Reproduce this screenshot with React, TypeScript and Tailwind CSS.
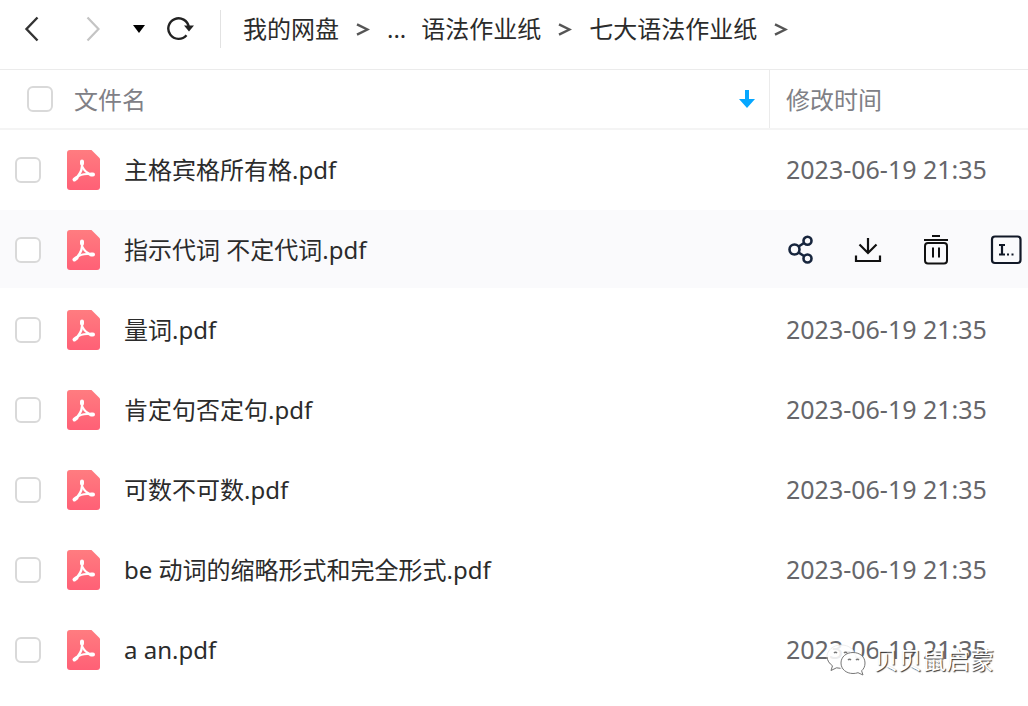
import React, { useState } from 'react';

interface FileItem {
  name: string;
  modified: string;
}

const files: FileItem[] = [
  { name: '主格宾格所有格.pdf', modified: '2023-06-19 21:35' },
  { name: '指示代词 不定代词.pdf', modified: '2023-06-19 21:35' },
  { name: '量词.pdf', modified: '2023-06-19 21:35' },
  { name: '肯定句否定句.pdf', modified: '2023-06-19 21:35' },
  { name: '可数不可数.pdf', modified: '2023-06-19 21:35' },
  { name: 'be 动词的缩略形式和完全形式.pdf', modified: '2023-06-19 21:35' },
  { name: 'a an.pdf', modified: '2023-06-19 21:35' },
];

const crumbs = ['我的网盘', '...', '语法作业纸', '七大语法作业纸'];

const PdfIcon = () => (
  <svg viewBox="0 0 33 40" className="w-[33px] h-10 shrink-0" aria-hidden="true">
    <defs>
      <linearGradient id="pdf-fill" x1="0" y1="0" x2="0" y2="1">
        <stop offset="0" stopColor="#ff7c80" />
        <stop offset="1" stopColor="#ff6076" />
      </linearGradient>
    </defs>
    <path d="M3 0H24.5L33 8.5V37a3 3 0 0 1-3 3H3a3 3 0 0 1-3-3V3a3 3 0 0 1 3-3Z" fill="url(#pdf-fill)" />
    <g fill="none" stroke="#fff" strokeLinecap="round" strokeLinejoin="round">
      <path d="M15 12C15.500 18 15 22 8 29.500" strokeWidth="2.400" />
      <path d="M15.500 17C17 20 20 24 25.500 24.500" strokeWidth="2" />
      <path d="M10 27.500C13 24.500 19 23.500 25.500 24.500" strokeWidth="2" />
      <path d="M15 11.500V13.500M7.500 29.500L9.500 28M24 24.500H26" strokeWidth="4" />
    </g>
  </svg>
);

const BackIcon = () => (
  <svg viewBox="0 0 16 26" className="w-4 h-[26px]" fill="none" stroke="currentColor" strokeWidth="2.400">
    <path d="M13.500 1.500L2.500 13L13.500 24.500" />
  </svg>
);

const ForwardIcon = () => (
  <svg viewBox="0 0 16 26" className="w-4 h-[26px]" fill="none" stroke="currentColor" strokeWidth="2.200">
    <path d="M3.500 1.500L14.500 13L3.500 24.500" />
  </svg>
);

const RefreshIcon = () => (
  <svg viewBox="0 0 28 26" className="w-7 h-[26px]" fill="none" stroke="currentColor" strokeWidth="2.400">
    <path d="M20.500 19.200A10.300 10.300 0 1 1 22.800 11" />
    <path d="M18 9.500H28L23 15.500Z" fill="currentColor" stroke="none" />
  </svg>
);

const CrumbArrow = () => (
  <svg viewBox="0 0 14 14" className="w-3.5 h-3.5 shrink-0" fill="none" stroke="#555" strokeWidth="2.400" aria-hidden="true">
    <path d="M1 2.300L11.500 7.500L1 12.700" />
  </svg>
);

const ShareIcon = () => (
  <svg viewBox="0 0 28 30" className="w-7 h-[30px]" fill="none" stroke="#17253d" strokeWidth="2.600">
    <circle cx="8.500" cy="14.500" r="5" />
    <circle cx="21.500" cy="5.800" r="4" />
    <circle cx="21.500" cy="23.500" r="4" />
    <path d="M12.600 11.500L18 8M12.600 17.500L18 21" />
  </svg>
);

const DownloadIcon = () => (
  <svg viewBox="0 0 28 30" className="w-7 h-[30px]" fill="none" stroke="#111" strokeWidth="2.200">
    <path d="M14 3V18M5.500 9.500L14 18L22.500 9.500M2 20.500V26H26V20.500" />
  </svg>
);

const DeleteIcon = () => (
  <svg viewBox="0 0 28 30" className="w-7 h-[30px]" fill="none" stroke="#111" strokeWidth="2">
    <path d="M10 1H18M2 5H26M11 12.500V22.500M17 12.500V22.500" />
    <rect x="3" y="8" width="22" height="20.500" rx="3" />
  </svg>
);

const RenameIcon = () => (
  <svg viewBox="0 0 32 30" className="w-8 h-[30px]" fill="none" stroke="#111827" strokeWidth="2.200">
    <rect x="2" y="1.500" width="28.500" height="26.500" rx="3" />
    <path d="M9 10H15M9 19.500H15M12 10V19.500M17 19.500H19M21.500 19.500H23.500" />
  </svg>
);

const WechatIcon = () => (
  <svg viewBox="0 0 40 32" className="w-10 h-8 shrink-0" aria-hidden="true">
    <path
      d="M15 1C7 1 1 6.500 1 12.500c0 4 2 7 5.500 9.300L5 26.500l5.500-2.700c1.700.5 3 .7 4.500.7 8 0 14-5 14-12S23 1 15 1Z"
      fill="#fff"
      fillOpacity="0.88"
      stroke="#e6e6e6"
      strokeWidth="0.700"
    />
    <path d="M1 13c.4 3.600 2.300 6.500 5.500 8.800L5 26.500l5.500-2.700 4 .5" fill="none" stroke="#777" strokeWidth="1" />
    <path
      d="M27 8.500c-7 0-12 4.500-12 10.500s5 10.500 12 10.500c2 0 3.500-.3 5-.8l5 2.300-1.400-4.200C38 24.700 39 22.300 39 19c0-6-5-10.500-12-10.500Z"
      fill="#fff"
      fillOpacity="0.940"
      stroke="#777"
      strokeWidth="1"
    />
    <path d="M8 9a2 2 0 0 1 3 0M18 9a2 2 0 0 1 3 0M22 16a2 2 0 0 1 3 0M30 16a2 2 0 0 1 3 0" fill="none" stroke="#777" strokeWidth="1.400" />
  </svg>
);

const checkboxStyle =
  'appearance-none block shrink-0 size-[26px] rounded-md border-2 border-[#d9d9d9] bg-white checked:bg-[#06a7ff] checked:border-[#06a7ff]';

const RowActions = () => (
  <div className="flex items-center justify-between pr-1.5">
    <button type="button" title="分享"><ShareIcon /></button>
    <button type="button" title="下载"><DownloadIcon /></button>
    <button type="button" title="删除"><DeleteIcon /></button>
    <button type="button" title="重命名"><RenameIcon /></button>
  </div>
);

export default function App() {
  const [selected, setSelected] = useState<string[]>([]);
  const [active, setActive] = useState(1);

  const toggle = (name: string) => {
    setSelected((prev) => (prev.includes(name) ? prev.filter((n) => n !== name) : [...prev, name]));
  };

  const toggleAll = () => {
    setSelected((prev) => (prev.length === files.length ? [] : files.map((f) => f.name)));
  };

  return (
    <div className="relative min-h-screen overflow-hidden bg-white text-2xl text-[#2b2b2b] font-['Noto_Sans','Noto_Sans_CJK_SC',sans-serif]">
      {/* Toolbar */}
      <header className="flex items-center h-[70px] pb-3 pl-6 border-b border-[#ebebeb]">
        <div className="flex items-center">
          <button type="button" title="后退" className="text-[#333]"><BackIcon /></button>
          <button type="button" title="前进" className="ml-11 text-[#c4c4c4]"><ForwardIcon /></button>
          <button type="button" title="历史" className="ml-8 text-black">
            <svg viewBox="0 0 14 10" className="w-3.5 h-2.5">
              <path d="M1 1H13L7 9Z" fill="currentColor" />
            </svg>
          </button>
          <button type="button" title="刷新" className="ml-5 text-[#222]"><RefreshIcon /></button>
        </div>
        <nav className="flex items-center h-[38px] ml-[26px] pl-[22px] border-l border-[#e2e2e2]">
          {crumbs.map((crumb) => (
            <React.Fragment key={crumb}>
              <a href="#" className="whitespace-nowrap">{crumb}</a>
              {crumb === '...' ? <span className="w-[15px]" /> : <span className="px-[17px]"><CrumbArrow /></span>}
            </React.Fragment>
          ))}
        </nav>
      </header>

      {/* File list */}
      <table className="w-full table-fixed border-separate border-spacing-0">
        <thead>
          <tr className="text-[#808086] text-left">
            <th className="h-[60px] p-0 font-normal border-b-2 border-[#f4f4f4]">
              <div className="flex items-center h-[58px] pl-[27px] pr-[13px] border-r border-[#ebebeb]">
                <input type="checkbox" aria-label="全选" className={checkboxStyle} checked={selected.length === files.length} onChange={toggleAll} />
                <button type="button" className="flex flex-1 items-center justify-between ml-[21px] pt-0.5">
                  文件名
                  <svg viewBox="0 0 18 20" className="w-[18px] h-5" aria-hidden="true">
                    <path d="M7 0H11V9H17L9 18L1 9H7Z" fill="#06a7ff" />
                  </svg>
                </button>
              </div>
            </th>
            <th className="w-[258px] p-0 pl-4 pt-0.5 font-normal border-b-2 border-[#f4f4f4]">修改时间</th>
          </tr>
        </thead>
        <tbody>
          {files.map((file, i) => (
            <tr key={file.name} onMouseEnter={() => setActive(i)}>
              <td className={`h-20 p-0 pt-0.5 border-b-2 border-transparent bg-clip-padding ${active === i ? 'bg-[#fafafc]' : ''}`}>
                <label className="flex items-center pl-[15px]">
                  <input type="checkbox" className={checkboxStyle} checked={selected.includes(file.name)} onChange={() => toggle(file.name)} />
                  <span className="ml-[26px]"><PdfIcon /></span>
                  <span className="ml-6 whitespace-nowrap">{file.name}</span>
                </label>
              </td>
              <td className={`h-20 p-0 pt-0.5 pl-4 border-b-2 border-transparent bg-clip-padding text-[25px] text-[#66666a] whitespace-nowrap ${active === i ? 'bg-[#fafafc]' : ''}`}>
                {active === i ? <RowActions /> : file.modified}
              </td>
            </tr>
          ))}
        </tbody>
      </table>

      {/* Watermark */}
      <div className="absolute right-[34px] top-[644px] flex items-center gap-2 text-white pointer-events-none">
        <WechatIcon />
        <span className="[text-shadow:1px_1px_1px_#333]">贝贝鼠启蒙</span>
      </div>
    </div>
  );
}
